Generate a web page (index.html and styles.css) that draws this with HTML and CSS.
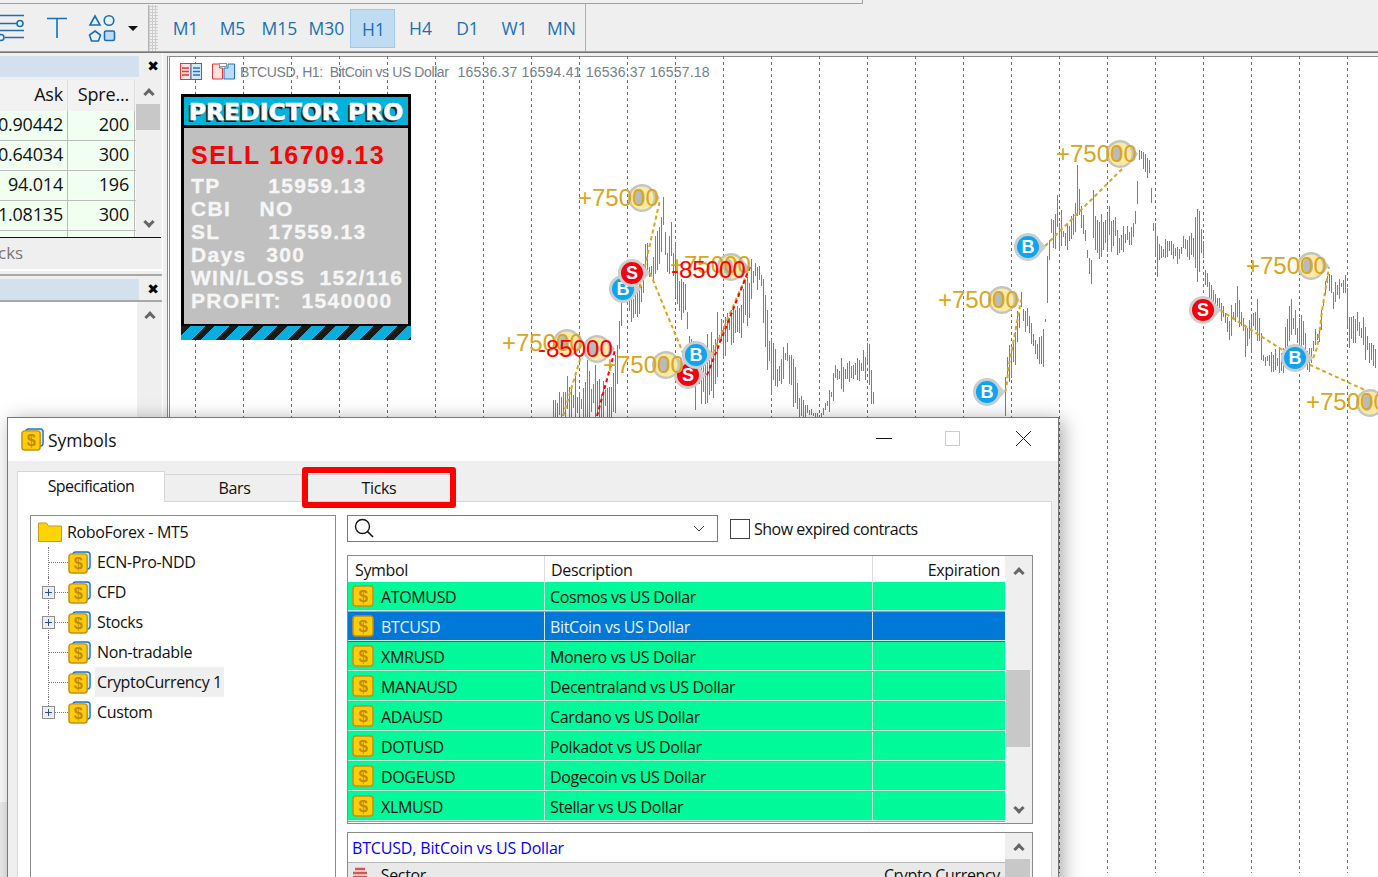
FILE: index.html
```html
<!DOCTYPE html>
<html lang="en">
  <head>
    <meta charset="UTF-8" />
    <title>Symbols</title>
    <link rel="stylesheet" href="styles.css">
  </head>
  <body>
    <svg class="defs" width="0" height="0">
      <defs>
        <symbol id="coin" viewBox="0 0 22 22">
          <rect x="1" y="1" width="20" height="20" rx="3" fill="#ffcd05" stroke="#c98f12" stroke-width="1.5"/>
          <text x="11" y="17" text-anchor="middle" class="coin-s">$</text>
        </symbol>
        <symbol id="stack" viewBox="0 0 24 24">
          <rect x="5" y="1" width="18" height="18" rx="3" fill="#d3e9f8" stroke="#1a78c0" stroke-width="1.5"/>
          <rect x="1" y="3" width="19" height="20" rx="3" fill="#ffcd05" stroke="#c98f12" stroke-width="1.5"/>
          <text x="10.5" y="18.5" text-anchor="middle" class="coin-s">$</text>
        </symbol>
        <g id="pin-b">
          <path d="M-2 -14a14 14 0 0 1 13 7l6 7-6 7a14 14 0 1 1-13-21z" fill="#c9cdd0"/>
          <circle cx="-1" cy="0" r="11" fill="#0ca5f2"/>
          <text x="-1" y="6" text-anchor="middle" class="pin-t">B</text>
        </g>
        <g id="pin-s">
          <path d="M-2 -14a14 14 0 0 1 13 7l6 7-6 7a14 14 0 1 1-13-21z" fill="#d0cdcd"/>
          <circle cx="-1" cy="0" r="11" fill="#f5000f"/>
          <text x="-1" y="6" text-anchor="middle" class="pin-t">S</text>
        </g>
        <g id="pin-c">
          <path d="M-2 -14a14 14 0 0 1 13 7l6 7-6 7a14 14 0 1 1-13-21z" fill="#c4c4c0"/>
          <circle cx="-1" cy="0" r="11.5" fill="#fce9a4"/>
          <ellipse cx="-4" cy="0" rx="5" ry="8" fill="#b8bbbd"/>
        </g>
      </defs>
    </svg>

    <div class="topline"></div>

    <div class="toolbar">
      <svg class="tools" width="147" height="47" viewBox="0 4 147 47">
        <g fill="none" stroke="#1a6fb3" stroke-width="1.6">
          <path d="M0 15.500H24M0 23.500H17M0 30.500H24M5 37.500H24"/>
          <circle cx="20" cy="23.500" r="3"/>
          <circle cx="1" cy="37.500" r="3" fill="#efefef"/>
          <path d="M47 18.500H67M57 18.500V38"/>
          <path d="M95 16l5 9h-10z"/>
          <circle cx="109" cy="20.500" r="4.800"/>
          <path d="M95 31l5.500 4-2 6h-7l-2-6z"/>
          <rect x="104.500" y="31" width="10" height="9.500" rx="1.500" fill="#bcdcf5"/>
        </g>
        <path d="M128 26h10l-5 5z" fill="#111"/>
      </svg>
      <div class="grip"></div>
      <div class="periods">
        <span class="period">M1</span>
        <span class="period">M5</span>
        <span class="period">M15</span>
        <span class="period">M30</span>
        <span class="period active">H1</span>
        <span class="period">H4</span>
        <span class="period">D1</span>
        <span class="period">W1</span>
        <span class="period">MN</span>
      </div>
    </div>

    <div class="workspace">
      <div class="sidebar">
        <div class="panel-head">
          <div class="panel-title"></div>
          <span class="panel-close">&#10006;</span>
        </div>
        <div class="watch">
          <div class="watch-table">
            <div class="watch-row watch-header"><span>Ask</span><span>Spre...</span></div>
            <div class="watch-row"><span>0.90442</span><span>200</span></div>
            <div class="watch-row"><span>0.64034</span><span>300</span></div>
            <div class="watch-row"><span>94.014</span><span>196</span></div>
            <div class="watch-row"><span>1.08135</span><span>300</span></div>
            <div class="watch-row"><span></span><span></span></div>
          </div>
          <div class="scroll watch-scroll">
            <span class="chev up"></span>
            <div class="thumb"></div>
            <span class="chev down"></span>
          </div>
        </div>
        <div class="watch-tabs">cks</div>
        <div class="panel-head second">
          <div class="panel-title"></div>
          <span class="panel-close">&#10006;</span>
        </div>
        <div class="nav-body">
          <div class="nav-white"></div>
          <div class="scroll"><span class="chev up"></span></div>
        </div>
      </div>

      <div class="chart">
        <svg id="plot" class="plot" width="1208" height="821" viewBox="170 56 1208 821">
          <g id="grid"></g>
          <path id="bars" fill="none" stroke="#76808c" stroke-width="1"/>
          <g fill="none" stroke="#daa520" stroke-width="2" stroke-dasharray="4 3">
            <path d="M563 416L582 353M640 288L660 200M650 273L683 353M713 353L750 267"/>
            <path d="M1005 392C1008 385 1007 370 1010 360L1021 300M1045 246L1136 155"/>
            <path d="M1220 310L1295 358L1378 396M1313 358C1320 345 1320 320 1323 305L1329 267"/>
          </g>
          <path d="M597 416L615 350M707 375L750 267" fill="none" stroke="#f00" stroke-width="2" stroke-dasharray="4 3"/>
          <use href="#pin-b" x="624" y="289"/>
          <use href="#pin-s" x="633" y="273"/>
          <use href="#pin-c" x="643" y="198"/>
          <use href="#pin-c" x="732" y="267"/>
          <use href="#pin-c" x="568" y="343"/>
          <use href="#pin-c" x="598" y="349"/>
          <use href="#pin-s" x="689" y="375"/>
          <use href="#pin-c" x="667" y="365"/>
          <use href="#pin-b" x="697" y="355"/>
          <use href="#pin-b" x="1029" y="247"/>
          <use href="#pin-b" x="988" y="392"/>
          <use href="#pin-s" x="1204" y="310"/>
          <use href="#pin-b" x="1296" y="358"/>
          <use href="#pin-c" x="1121" y="154"/>
          <use href="#pin-c" x="1003" y="300"/>
          <use href="#pin-c" x="1312" y="266"/>
          <use href="#pin-c" x="1371" y="403"/>
          <g class="gain">
            <text x="578" y="206">+75000</text>
            <text x="670" y="273">+75000</text>
            <text x="502" y="351">+75000</text>
            <text x="603" y="373">+75000</text>
            <text x="1056" y="162">+75000</text>
            <text x="938" y="308">+75000</text>
            <text x="1246" y="274">+75000</text>
            <text x="1306" y="410">+75000</text>
          </g>
          <g class="loss">
            <text x="671" y="278">-85000</text>
            <text x="538" y="357">-85000</text>
          </g>
        </svg>

        <div class="chart-caption">
          <svg width="22" height="17" viewBox="0 0 22 17">
            <rect x="0.500" y="0.500" width="10.500" height="16" fill="#fde3e0" stroke="#e03a35"/>
            <rect x="11" y="0.500" width="10.500" height="16" fill="#d3e9f8" stroke="#1a78c0"/>
            <path d="M2 5h7M2 8.500h7M2 12h7" stroke="#e03a35" stroke-width="1.500"/>
            <path d="M13 5h7M13 8.500h7M13 12h7" stroke="#1a78c0" stroke-width="1.500"/>
          </svg>
          <svg width="23" height="17" viewBox="0 0 23 17">
            <path d="M0.500 1h7v4h3v11h-10z" fill="#fde3e0" stroke="#e03a35"/>
            <path d="M14 5h2V1h6.500v15H12V5z" fill="#bcdcf5" stroke="#1a78c0"/>
            <rect x="7.500" y="0.500" width="7" height="3" fill="#fff" stroke="#8a96a3"/>
          </svg>
          <span class="caption-name">BTCUSD, H1:  BitCoin vs US Dollar</span>
          <span class="caption-prices">16536.37 16594.41 16536.37 16557.18</span>
        </div>

        <div class="predictor">
          <div class="predictor-head">PREDICTOR PRO</div>
          <div class="predictor-body">
            <div class="predictor-signal">SELL 16709.13</div>
            <div class="predictor-line">TP      &#8201;15959.13</div>
            <div class="predictor-line">CBI    NO</div>
            <div class="predictor-line">SL      &#8201;17559.13</div>
            <div class="predictor-line">Days  &#8201;300</div>
            <div class="predictor-line">WIN/LOSS  152/116</div>
            <div class="predictor-line">PROFIT:  &#8201;1540000</div>
          </div>
          <div class="predictor-stripes"></div>
        </div>
      </div>
    </div>

    <div class="dialog">
      <div class="dialog-title">
        <svg class="title-icon" width="23" height="23"><use href="#stack"/></svg>
        <span class="title-text">Symbols</span>
        <svg class="win-btns" width="170" height="20" viewBox="0 0 170 20">
          <path d="M0 10.500H16" stroke="#111" fill="none"/>
          <rect x="69.500" y="3.500" width="14" height="14" fill="none" stroke="#ccc" stroke-width="1"/>
          <path d="M140 3L155 18M155 3L140 18" stroke="#222" fill="none"/>
        </svg>
      </div>
      <div class="dialog-body">
        <div class="tabs">
          <div class="tab active">Specification</div>
          <div class="tab bars">Bars</div>
          <div class="tab">Ticks</div>
        </div>
        <div class="tab-panel">
          <div class="tree">
            <div class="tree-root">
              <svg width="24" height="20" viewBox="0 0 24 20">
                <path d="M0.500 19.500V1h8l2 3h13v15.500z" fill="#ffd400" stroke="#c99a1c"/>
              </svg>
              <span>RoboForex - MT5</span>
            </div>
            <div class="tree-item"><svg width="23" height="23"><use href="#stack"/></svg><span>ECN-Pro-NDD</span></div>
            <div class="tree-item"><i class="plus"></i><svg width="23" height="23"><use href="#stack"/></svg><span>CFD</span></div>
            <div class="tree-item"><i class="plus"></i><svg width="23" height="23"><use href="#stack"/></svg><span>Stocks</span></div>
            <div class="tree-item"><svg width="23" height="23"><use href="#stack"/></svg><span>Non-tradable</span></div>
            <div class="tree-item"><svg width="23" height="23"><use href="#stack"/></svg><span class="picked">CryptoCurrency 1</span></div>
            <div class="tree-item last"><i class="plus"></i><svg width="23" height="23"><use href="#stack"/></svg><span>Custom</span></div>
          </div>

          <div class="right-col">
            <div class="filter">
              <div class="search">
                <svg width="22" height="22" viewBox="0 0 22 22">
                  <circle cx="9.500" cy="9.500" r="7" fill="none" stroke="#111" stroke-width="1.400"/>
                  <path d="M14.500 14.500L20 20" stroke="#111" stroke-width="1.600"/>
                </svg>
                <svg class="combo-arrow" width="12" height="7" viewBox="0 0 12 7">
                  <path d="M1 1l5 5 5-5" fill="none" stroke="#444"/>
                </svg>
              </div>
              <span class="check"></span>
              <span class="check-label">Show expired contracts</span>
            </div>

            <div class="symbols">
              <div class="symbols-table">
                <div class="sym-row sym-header"><span>Symbol</span><span>Description</span><span class="exp">Expiration</span></div>
                <div class="sym-row"><span><svg width="22" height="22"><use href="#coin"/></svg>ATOMUSD</span><span>Cosmos vs US Dollar</span><span></span></div>
                <div class="sym-row selected"><span><svg width="22" height="22"><use href="#coin"/></svg>BTCUSD</span><span>BitCoin vs US Dollar</span><span></span></div>
                <div class="sym-row"><span><svg width="22" height="22"><use href="#coin"/></svg>XMRUSD</span><span>Monero vs US Dollar</span><span></span></div>
                <div class="sym-row"><span><svg width="22" height="22"><use href="#coin"/></svg>MANAUSD</span><span>Decentraland vs US Dollar</span><span></span></div>
                <div class="sym-row"><span><svg width="22" height="22"><use href="#coin"/></svg>ADAUSD</span><span>Cardano vs US Dollar</span><span></span></div>
                <div class="sym-row"><span><svg width="22" height="22"><use href="#coin"/></svg>DOTUSD</span><span>Polkadot vs US Dollar</span><span></span></div>
                <div class="sym-row"><span><svg width="22" height="22"><use href="#coin"/></svg>DOGEUSD</span><span>Dogecoin vs US Dollar</span><span></span></div>
                <div class="sym-row"><span><svg width="22" height="22"><use href="#coin"/></svg>XLMUSD</span><span>Stellar vs US Dollar</span><span></span></div>
              </div>
              <div class="scroll sym-scroll">
                <span class="chev up"></span>
                <div class="thumb"></div>
                <span class="chev down"></span>
              </div>
            </div>

            <div class="details">
              <div class="details-main">
                <div class="details-title">BTCUSD, BitCoin vs US Dollar</div>
                <div class="details-row">
                  <span>
                    <svg width="16" height="14" viewBox="0 0 16 14"><path d="M3 2h10M1 6h14M1 10h14" stroke-width="2.500" stroke="#d9534f"/></svg>
                    Sector
                  </span>
                  <span>Crypto Currency</span>
                </div>
              </div>
              <div class="scroll details-scroll">
                <span class="chev up"></span>
                <div class="thumb"></div>
              </div>
            </div>
          </div>
        </div>
      </div>
      <div class="ticks-mark"></div>
    </div>

    <script src="chart.js"></script>
  </body>
</html>
```

FILE: styles.css
```css
html,
body {
  margin: 0;
  height: 877px;
  overflow: hidden;
}
body {
  position: relative;
  width: 1378px;
  background: #efefef;
  font-family: "Open Sans", "Noto Sans", sans-serif;
  color: #111;
}
.defs {
  position: absolute;
}
.coin-s {
  font: bold 17px "Liberation Sans", sans-serif;
  fill: #c08a10;
}
.pin-t {
  font: bold 18px "Liberation Sans", sans-serif;
  fill: #fff;
}

/* top toolbar */
.topline {
  width: 862px;
  height: 3px;
  border-right: 1px solid #a0a0a0;
  border-bottom: 1px solid #a0a0a0;
}
.toolbar {
  display: flex;
  height: 47px;
  border-bottom: 1px solid #9a9a9a;
  box-sizing: content-box;
}
.grip {
  width: 9px;
  margin: 1px 0 0 1px;
  border-left: 1px solid #b5b5b5;
  background: radial-gradient(circle, #ccc 1px, transparent 1.2px) 2px 0 / 3px 3px;
}
.periods {
  display: flex;
  align-items: center;
  padding-left: 3px;
  padding-right: 1px;
  border-right: 1px solid #b0b0b0;
}
.period {
  width: 47px;
  height: 39px;
  margin-top: 1px;
  padding-left: 2px;
  line-height: 39px;
  text-align: center;
  font-size: 17.500px;
  color: #1a6fb3;
  box-sizing: border-box;
}
.period.active {
  width: 45px;
  margin: 1px 1px 0;
  background: #bfdcf3;
  border: 1px solid #9cc9ee;
  line-height: 38px;
}

/* main area */
.workspace {
  display: flex;
  height: 826px;
  border-top: 1px solid #777;
}
.sidebar {
  width: 162px;
  flex: none;
  border-right: 1px solid #fff;
}
.panel-head {
  display: flex;
  height: 22px;
  margin-top: 2px;
  align-items: center;
}
.panel-title {
  width: 139px;
  height: 21px;
  flex: none;
  background: #d3e0ed;
}
.panel-close {
  width: 28px;
  flex: none;
  text-align: center;
  font: bold 14px "DejaVu Sans", sans-serif;
  color: #000;
}
.watch {
  display: flex;
  height: 157px;
  margin: 3px 1px 0 0;
  border-bottom: 1px solid #111;
}
.watch-table {
  width: 136px;
  overflow: hidden;
}
.watch-row {
  display: flex;
  height: 29px;
  border-bottom: 1px solid #bdbdbd;
  background: #f0fff0;
  font-size: 18px;
  letter-spacing: -0.2px;
  line-height: 27px;
}
.watch-row span {
  width: 68px;
  flex: none;
  padding-right: 4px;
  box-sizing: border-box;
  text-align: right;
  border-right: 1px solid #bdbdbd;
  white-space: nowrap;
  direction: rtl;
}
.watch-row span + span {
  width: 67px;
  padding-right: 5px;
}
.watch-header {
  height: 31px;
  background: #f2f2f2;
  border-bottom: 0;
  line-height: 29px;
}
.watch-header span {
  direction: ltr;
  border-right-color: #ddd;
}
.scroll {
  position: relative;
  flex: none;
  width: 25px;
  background: #efefef;
}
.thumb {
  background: #c8c8c8;
}
.chev {
  position: absolute;
  left: 9px;
  width: 8px;
  height: 8px;
  border-top: 3px solid #666;
  border-left: 3px solid #666;
  box-sizing: border-box;
}
.chev.up {
  transform: rotate(45deg);
}
.chev.down {
  transform: rotate(225deg);
}
.watch-scroll .chev.up {
  top: 10px;
}
.watch-scroll .thumb {
  margin-top: 24px;
  height: 26px;
  width: 24px;
}
.watch-scroll .chev.down {
  bottom: 11px;
}
.watch-tabs {
  height: 31px;
  margin-left: -2px;
  font-size: 17px;
  line-height: 29px;
  color: #777;
  border-bottom: 2px solid #fff;
}
.panel-head.second {
  border-top: 2px solid #a8a8a8;
  margin-top: 3px;
  padding-top: 2px;
}
.nav-body {
  display: flex;
  height: 500px;
  border-top: 2px solid #a8a8a8;
}
.nav-white {
  width: 137px;
  background: #fff;
}
.nav-body .chev.up {
  top: 11px;
}

/* chart window */
.chart {
  position: relative;
  flex: 1;
  margin-top: 3px;
  margin-left: 4px;
  border-top: 1px solid #8a8a8a;
  border-left: 3px double #888;
  background: #fff;
}
.plot {
  position: absolute;
  left: -3px;
  top: -1px;
  margin-left: 3px;
}
.gain text,
.loss text {
  font: 24px "Liberation Sans", sans-serif;
}
.gain text {
  fill: #daa520;
}
.loss text {
  fill: #f00;
}
.chart-caption {
  position: absolute;
  left: 10px;
  top: 6px;
  display: flex;
  gap: 10px;
  align-items: center;
  font: 14px "Liberation Sans", sans-serif;
  color: #76808c;
  white-space: pre;
}
.caption-name {
  margin-left: -5px;
  letter-spacing: -0.4px;
}
.caption-prices {
  margin-left: -1px;
  letter-spacing: 0.2px;
}
.predictor {
  position: absolute;
  left: 11px;
  top: 37px;
  width: 230px;
}
.predictor-head {
  height: 28px;
  border: 3px solid #000;
  border-bottom: 0;
  background: #00b2dc;
  font: bold 23.500px/31px "DejaVu Sans", sans-serif;
  text-align: center;
  color: #fff;
  -webkit-text-stroke: 0.6px #fff;
  text-shadow: -2px 2px 0 #222;
}
.predictor-body {
  height: 184px;
  border: 3px solid #000;
  padding: 12px 0 0 7px;
  background: #c0c0c0;
  font-family: "Liberation Sans", sans-serif;
  font-weight: bold;
  color: #f6f6f6;
}
.predictor-signal {
  font-size: 25px;
  line-height: 30px;
  letter-spacing: 1.500px;
  color: #f00;
  margin-bottom: 4px;
}
.predictor-line {
  font-size: 21px;
  line-height: 23px;
  letter-spacing: 1.300px;
  white-space: pre;
  -webkit-text-stroke: 0.3px #f6f6f6;
}
.predictor-stripes {
  height: 14px;
  margin-top: -1px;
  background: repeating-linear-gradient(135deg, #1a1a18 0 7px, #0aaede 7px 17px);
}

/* Symbols dialog, floats over the terminal */
.dialog {
  position: absolute;
  left: 7px;
  top: 417px;
  width: 1050px;
  height: 480px;
  border: 1px solid #777;
  background: #fff;
  box-shadow: 4px 3px 18px rgba(0, 0, 0, 0.35);
  letter-spacing: -0.35px;
}
.dialog-title {
  display: flex;
  align-items: center;
  height: 43px;
  padding-left: 13px;
  font-size: 17.500px;
}
.title-text {
  margin-left: 4px;
  letter-spacing: 0;
}
.win-btns {
  margin: -4px 12px 0 auto;
}
.dialog-body {
  height: 436px;
  padding: 9px 6px 0 9px;
  background: #efefef;
  font-size: 16px;
}
.tabs {
  display: flex;
  align-items: flex-end;
  height: 31px;
}
.tab {
  width: 137px;
  height: 27px;
  border-top: 1px solid #d6d6d6;
  border-right: 1px solid #d6d6d6;
  box-sizing: border-box;
  text-align: center;
  line-height: 26px;
}
.tab.bars {
  padding-left: 3px;
}
.tab.active {
  width: 148px;
  height: 31px;
  background: #fff;
  border: 1px solid #d6d6d6;
  border-bottom: 0;
  margin-bottom: -1px;
  position: relative;
  line-height: 28px;
  letter-spacing: -0.6px;
}
.tab:last-child {
  width: 154px;
  border-right: 0;
}
.tab-panel {
  display: flex;
  height: 400px;
  padding: 13px 17px 0 12px;
  background: #fff;
  border: 1px solid #d6d6d6;
  box-sizing: border-box;
}
.tree {
  width: 306px;
  height: 400px;
  flex: none;
  border: 1px solid #8a8a8a;
  box-sizing: border-box;
  padding-top: 1px;
}
.tree-root,
.tree-item {
  display: flex;
  align-items: center;
  height: 30px;
}
.tree-root {
  padding-left: 7px;
  gap: 5px;
}
.tree-item {
  position: relative;
  padding-left: 37px;
  gap: 6px;
}
.tree-item::before {
  content: "";
  position: absolute;
  left: 17px;
  top: 15px;
  width: 20px;
  border-top: 1px dotted #777;
}
.tree-item::after {
  content: "";
  position: absolute;
  left: 17px;
  top: 0;
  height: 30px;
  border-left: 1px dotted #777;
}
.tree-item.last::after {
  height: 15px;
}
.tree-item .picked {
  background: #efefef;
  line-height: 30px;
  height: 30px;
  padding-right: 2px;
  margin-left: -2px;
  padding-left: 2px;
}
.plus {
  position: absolute;
  z-index: 1;
  left: 11px;
  top: 9px;
  width: 11px;
  height: 11px;
  border: 1px solid #909090;
  background:
    linear-gradient(#2b4f8c, #2b4f8c) center / 7px 1px no-repeat,
    linear-gradient(#2b4f8c, #2b4f8c) center / 1px 7px no-repeat,
    #eee;
}
.right-col {
  width: 686px;
  margin-left: 11px;
  flex: none;
}
.filter {
  display: flex;
  align-items: center;
  height: 28px;
}
.search {
  display: flex;
  align-items: center;
  justify-content: space-between;
  width: 371px;
  height: 27px;
  margin-top: -2px;
  padding: 0 12px 0 5px;
  border: 1px solid #7a7a7a;
  box-sizing: border-box;
}
.check {
  width: 18px;
  height: 18px;
  margin-left: 12px;
  border: 1px solid #444;
}
.check-label {
  margin-left: 4px;
  letter-spacing: -0.5px;
}
.symbols {
  display: flex;
  margin-top: 12px;
  height: 269px;
  border: 1px solid #8a8a8a;
  box-sizing: border-box;
  overflow: hidden;
  background: #fff;
}
.symbols-table {
  width: 657px;
  flex: none;
}
.sym-row {
  display: grid;
  grid-template-columns: 197px 328px 132px;
  height: 30px;
  background: #00fa9a;
  line-height: 29px;
  white-space: nowrap;
}
.sym-row span {
  display: flex;
  align-items: center;
  height: 29px;
  padding-left: 5px;
  padding-top: 2px;
  box-sizing: border-box;
  border-right: 1px solid #c9e8d9;
  border-bottom: 1px solid #c9e8d9;
}
.sym-row span:last-child {
  border-right: 0;
}
.sym-row svg {
  margin: -2px 7px 0 -1px;
  flex: none;
}
.sym-row.selected {
  background: #0078d7;
  color: #e8f4ff;
}
.sym-header {
  height: 26px;
  background: #fff;
}
.sym-header span {
  height: 26px;
  padding-left: 7px;
  border-bottom: 0;
  border-right: 1px solid #ddd;
}
.sym-header span + span {
  padding-left: 6px;
}
.sym-header .exp {
  justify-content: flex-end;
  padding-right: 5px;
}
.sym-scroll {
  width: 27px;
}
.sym-scroll .chev.up {
  top: 13px;
  left: 10px;
}
.sym-scroll .thumb {
  position: absolute;
  top: 114px;
  left: 1px;
  width: 24px;
  height: 77px;
}
.sym-scroll .chev.down {
  bottom: 11px;
  left: 10px;
}
.details {
  display: flex;
  margin-top: 8px;
  height: 60px;
  border: 1px solid #8a8a8a;
  box-sizing: border-box;
  background: #fff;
}
.details-main {
  width: 657px;
}
.details-title {
  height: 29px;
  line-height: 30px;
  padding-left: 4px;
  color: #00f;
  border-bottom: 1px solid #b8b8b8;
  letter-spacing: -0.16px;
}
.details-row {
  display: flex;
  justify-content: space-between;
  height: 30px;
  padding: 0 5px 0 4px;
  background: #e9e9e9;
  line-height: 25px;
}
.details-row svg {
  margin-right: 9px;
}
.details-scroll {
  width: 27px;
}
.details-scroll .chev.up {
  top: 12px;
  left: 10px;
}
.details-scroll .thumb {
  position: absolute;
  top: 26px;
  width: 25px;
  height: 30px;
}
.ticks-mark {
  position: absolute;
  left: 294px;
  top: 49px;
  width: 154px;
  height: 41px;
  border: 6px solid #f00;
  border-radius: 3px;
  box-sizing: border-box;
}
```

FILE: chart.js
```js
// price bars: envelope of [x, high, low], noise added per bar
const leftBars = [
  [553, 400, 430], [567, 365, 430], [583, 380, 430], [585, 353, 430], [612, 380, 430],
  [616, 313, 420], [623, 252, 312], [627, 240, 310], [633, 273, 347], [640, 280, 310],
  [645, 233, 287], [650, 250, 300], [657, 230, 270], [661, 190, 270], [663, 182, 230],
  [667, 245, 290], [671, 222, 280], [676, 246, 350], [680, 270, 325], [686, 285, 325],
  [690, 335, 403], [700, 340, 420], [712, 313, 420], [720, 300, 370], [730, 300, 350],
  [740, 290, 340], [750, 260, 330], [755, 245, 290], [760, 255, 290], [765, 293, 350],
  [770, 330, 400], [780, 355, 395], [786, 338, 370], [795, 360, 420], [803, 400, 420],
  [820, 414, 420], [825, 395, 420], [830, 380, 420], [835, 360, 390], [845, 350, 395],
  [855, 355, 380], [860, 350, 385], [868, 335, 380], [873, 380, 420],
];
const rightBars = [
  [1005, 373, 420], [1007, 325, 400], [1010, 350, 377], [1012, 330, 380], [1017, 303, 360],
  [1021, 282, 320], [1023, 298, 333], [1027, 307, 333], [1033, 327, 353], [1037, 333, 360],
  [1041, 307, 388], [1043, 305, 370], [1045, 317, 323], [1047, 217, 323], [1051, 203, 253],
  [1057, 192, 253], [1063, 217, 250], [1068, 223, 250], [1075, 202, 233], [1077, 162, 237],
  [1083, 203, 240], [1088, 245, 283], [1091, 245, 287], [1093, 188, 263], [1098, 210, 263],
  [1105, 217, 253], [1112, 198, 253], [1120, 227, 257], [1127, 223, 250], [1133, 220, 248],
  [1137, 168, 227], [1139, 135, 175], [1143, 143, 173], [1150, 145, 187], [1152, 207, 233],
  [1157, 232, 277], [1162, 237, 270], [1170, 235, 257], [1178, 245, 268], [1183, 233, 253],
  [1190, 233, 263], [1197, 192, 287], [1202, 228, 253], [1205, 265, 290], [1210, 283, 303],
  [1220, 293, 320], [1230, 307, 343], [1238, 277, 327], [1245, 320, 357], [1257, 283, 347],
  [1263, 347, 367], [1273, 350, 377], [1283, 343, 377], [1290, 283, 353], [1297, 303, 360],
  [1303, 320, 360], [1308, 347, 377], [1313, 333, 360], [1320, 317, 340], [1323, 290, 310],
  [1328, 260, 287], [1333, 283, 310], [1340, 268, 300], [1345, 273, 307], [1350, 303, 373],
  [1357, 310, 333], [1365, 317, 360], [1370, 343, 367], [1376, 337, 368],
];

let seed = 7;
function rnd() {
  seed = (seed * 16807) % 2147483647;
  return seed / 2147483647;
}

function buildBars(points) {
  let d = "";
  let i = 0;
  for (let x = points[0][0]; x <= points[points.length - 1][0]; x += 2) {
    while (points[i + 1] && points[i + 1][0] < x) i++;
    const a = points[i];
    const b = points[i + 1] || a;
    const t = b[0] === a[0] ? 0 : (x - a[0]) / (b[0] - a[0]);
    const high = a[1] + (b[1] - a[1]) * t;
    const low = a[2] + (b[2] - a[2]) * t;
    const range = low - high;
    const top = Math.round(high + rnd() * range * 0.45);
    const bottom = Math.round(low - rnd() * range * 0.45);
    d += `M${x + 0.5} ${top}V${bottom}`;
  }
  return d;
}

document.getElementById("bars").setAttribute("d", buildBars(leftBars) + buildBars(rightBars));

// vertical period separators
const grid = document.getElementById("grid");
for (let x = 195; x < 1378; x += 48) {
  const line = document.createElementNS("http://www.w3.org/2000/svg", "path");
  line.setAttribute("d", `M${x + 0.5} 56V873`);
  line.setAttribute("stroke", "#6e6e6e");
  line.setAttribute("stroke-dasharray", "3 3");
  grid.appendChild(line);
}
```
